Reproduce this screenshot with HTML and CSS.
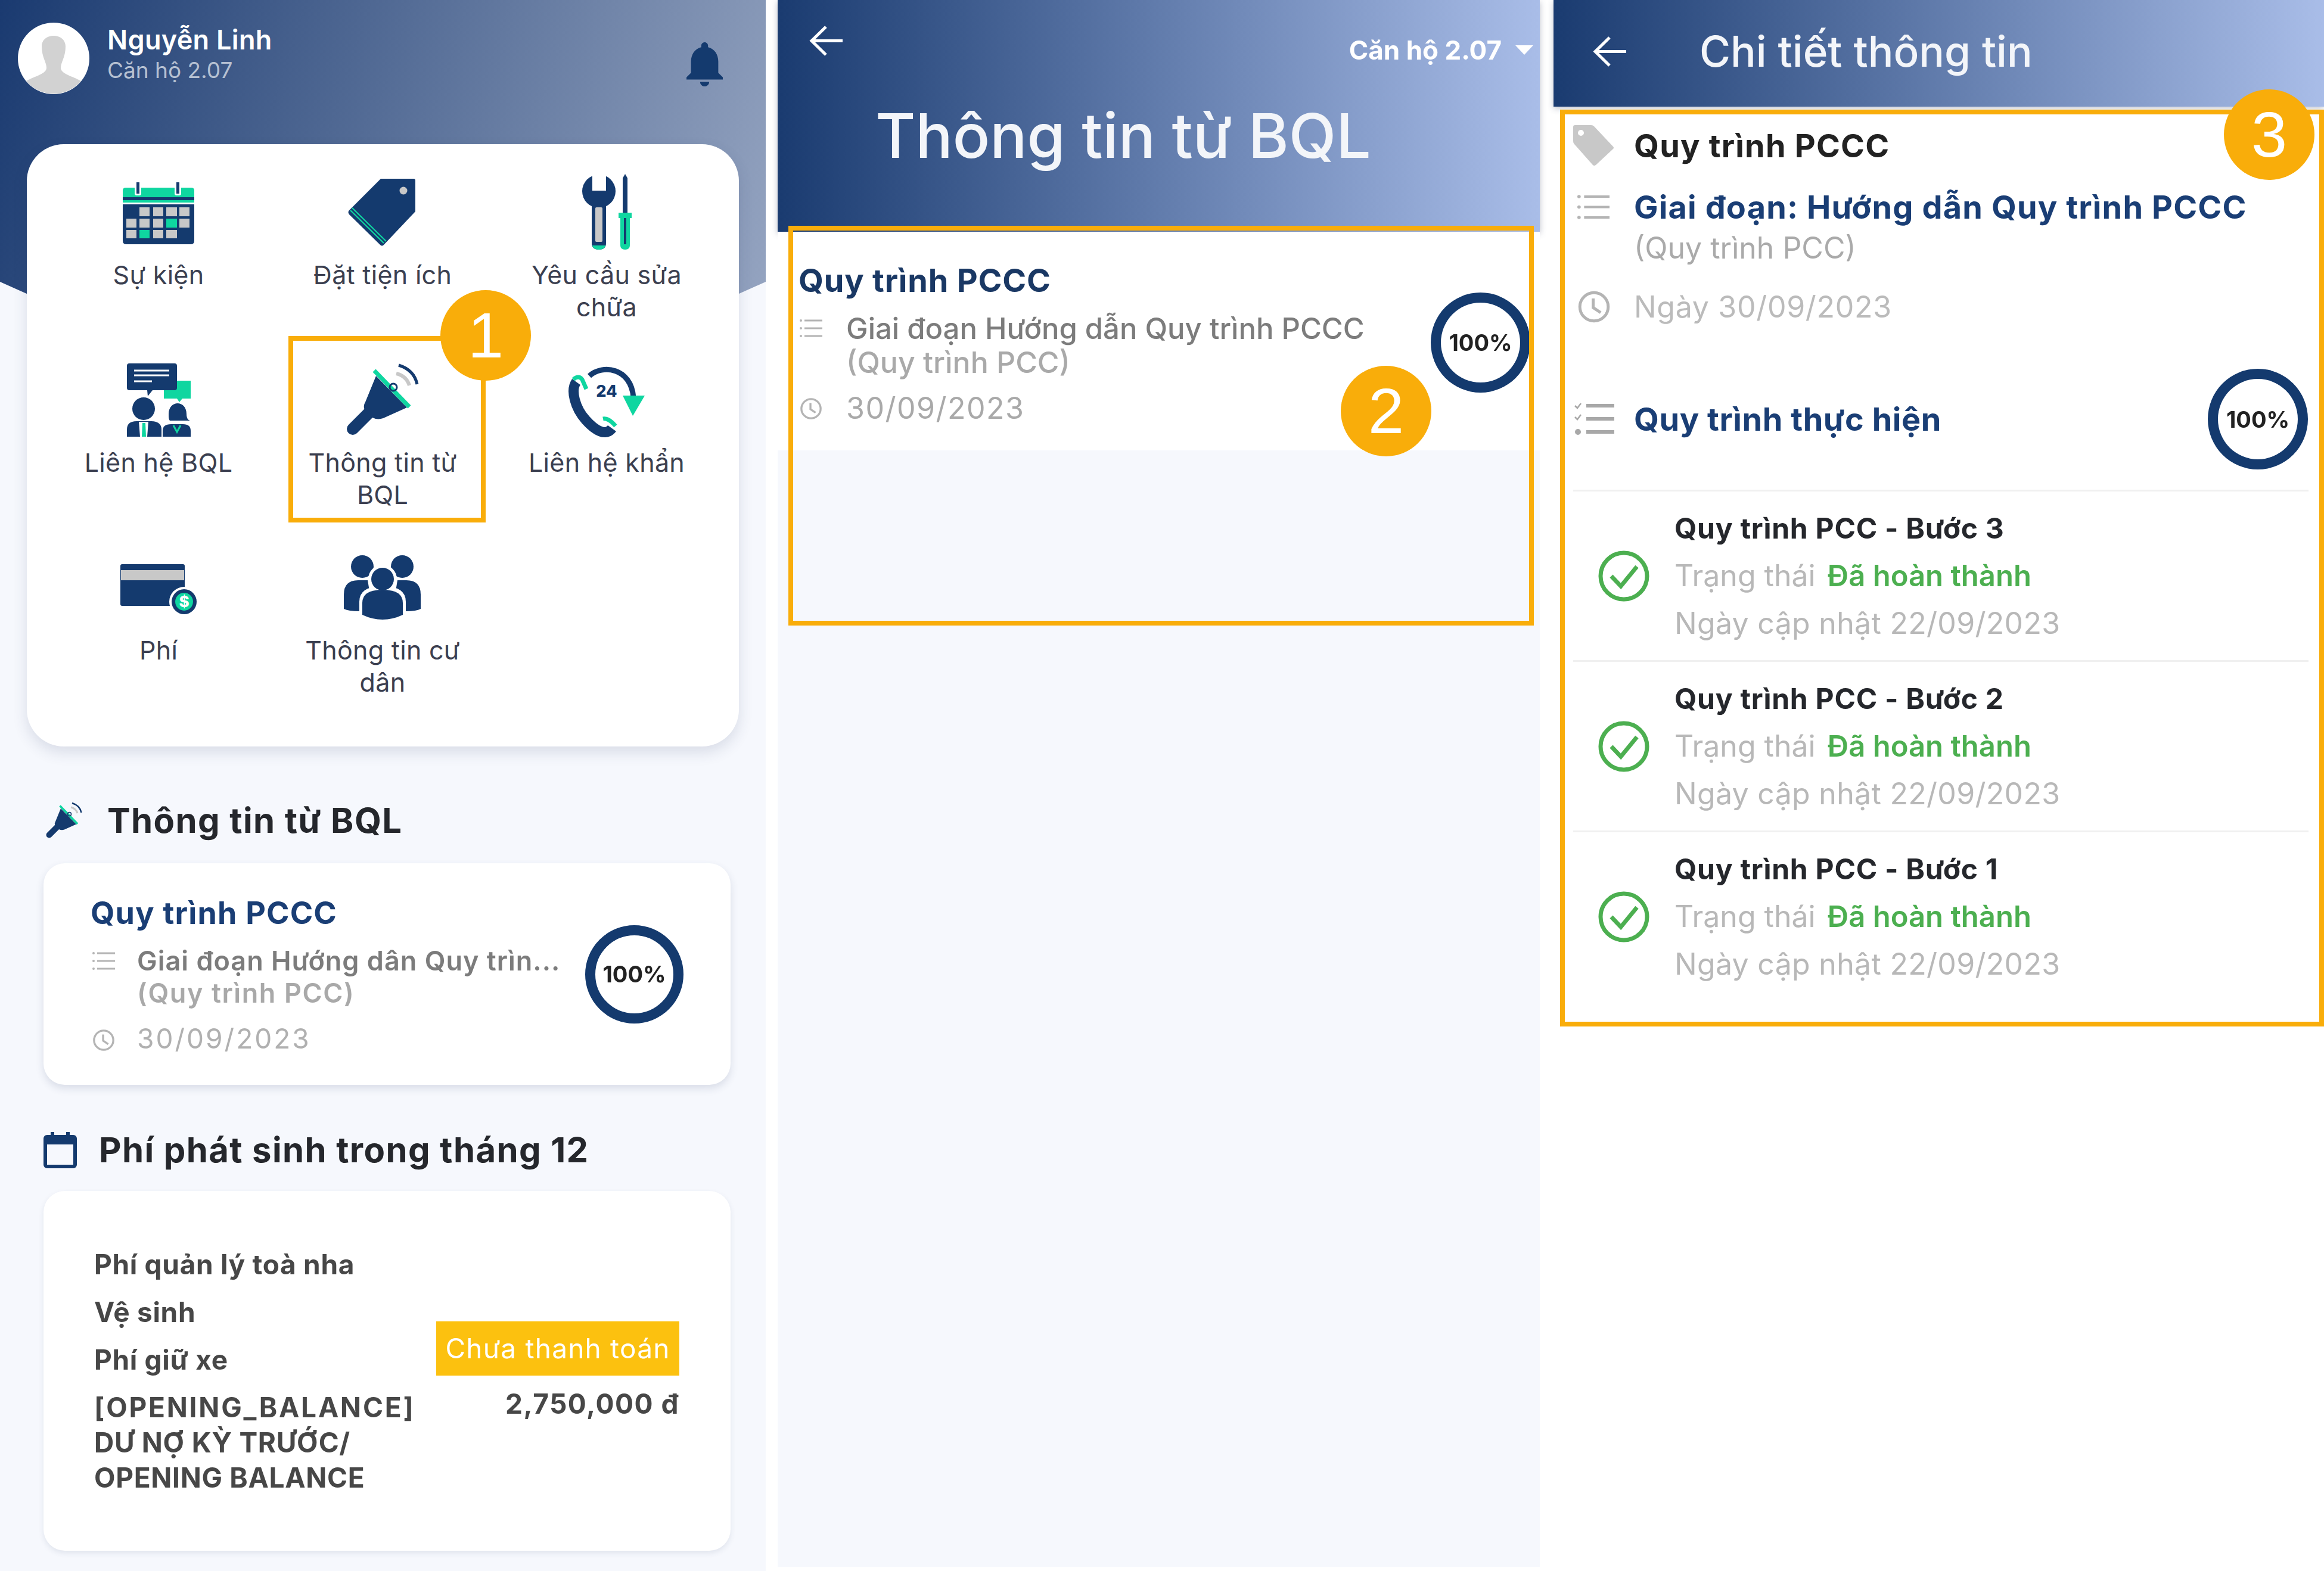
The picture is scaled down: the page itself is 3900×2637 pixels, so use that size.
FILE: index.html
```html
<!DOCTYPE html>
<html lang="vi">
<head>
    <meta charset="UTF-8">
    <meta name="viewport" content="width=device-width, initial-scale=1.0">
    <title>Thông tin từ BQL</title>
    <link rel="stylesheet" href="styles.css">
</head>
<body>
    <svg class="icon-defs" width="0" height="0">
        <symbol id="i-megaphone" viewBox="0 0 130 130">
            <path d="M44 84 L15 113" stroke="#143a6e" stroke-width="20" stroke-linecap="round"/>
            <path d="M54 24 L106 77 L66 95 Q52 100 40 88 Q30 78 36 68 Z" fill="#143a6e"/>
            <path d="M51 15 L110 76" stroke="#0fd6a0" stroke-width="7"/>
            <path d="M92 6 Q118 14 123 38" fill="none" stroke="#143a6e" stroke-width="5"/>
            <path d="M88 20 Q105 24 110 40" fill="none" stroke="#c8c8c8" stroke-width="6"/>
            <circle cx="83" cy="43" r="6" fill="none" stroke="#143a6e" stroke-width="3"/>
        </symbol>
        <symbol id="i-list" viewBox="0 0 38 32">
            <g fill="#b4b4b4">
                <circle cx="2" cy="3" r="2"/><rect x="8" y="1.5" width="30" height="3"/>
                <circle cx="2" cy="16" r="2"/><rect x="8" y="14.5" width="30" height="3"/>
                <circle cx="2" cy="29" r="2"/><rect x="8" y="27.5" width="30" height="3"/>
            </g>
        </symbol>
        <symbol id="i-clock" viewBox="0 0 40 40">
            <circle cx="20" cy="20" r="17" fill="none" stroke="#b4b4b4" stroke-width="3.5"/>
            <path d="M19 10 V21 L28 27" fill="none" stroke="#b4b4b4" stroke-width="3.5"/>
        </symbol>
        <symbol id="i-check" viewBox="0 0 86 86">
            <circle cx="43" cy="43" r="39" fill="none" stroke="#4caf50" stroke-width="7"/>
            <path d="M22 43 L38 60 L65 27" fill="none" stroke="#4caf50" stroke-width="7"/>
        </symbol>
        <symbol id="i-back" viewBox="0 0 57 53">
            <path d="M56 26.5 H5 M28 3 L4 26.5 L28 50" fill="none" stroke="#fff" stroke-width="5"/>
        </symbol>
    </svg>

    <div class="screens">

        <!-- home -->
        <section class="phone phone-home">
            <header class="home-head">
                <svg class="avatar" viewBox="0 0 120 120">
                    <circle cx="60" cy="60" r="60" fill="#fff"/>
                    <path d="M40 40 C40 16 80 16 80 40 C80 58 72 66 72 76 C72 86 92 90 106 98 A60 60 0 0 1 14 98 C28 90 48 86 48 76 C48 66 40 58 40 40 Z" fill="#d2d2d2"/>
                </svg>
                <div class="home-user">
                    <div class="home-name">Nguyễn Linh</div>
                    <div class="home-flat">Căn hộ 2.07</div>
                </div>
                <svg class="bell" viewBox="4 2.5 16 19.5" preserveAspectRatio="none">
                    <path fill="#143a6e" d="M12 22c1.1 0 2-.9 2-2h-4c0 1.1.9 2 2 2zm6-6v-5c0-3.07-1.63-5.64-4.5-6.32V4c0-.83-.67-1.5-1.5-1.5s-1.5.67-1.5 1.5v.68C7.64 5.36 6 7.92 6 11v5l-2 2v1h16v-1l-2-2z"/>
                </svg>
            </header>

            <div class="menu-card">
                <div class="menu-item">
                    <svg class="menu-icon" viewBox="0 0 130 130">
                        <path d="M5 28 Q5 23 10 23 H120 Q125 23 125 28 V48 H5 Z" fill="#0fd6a0"/>
                        <rect x="5" y="39" width="120" height="5" fill="#143a6e"/>
                        <path d="M5 51 H125 V112 Q125 118 119 118 H11 Q5 118 5 112 Z" fill="#143a6e"/>
                        <rect x="25" y="14" width="11" height="22" rx="3" fill="#fff"/>
                        <rect x="92" y="14" width="11" height="22" rx="3" fill="#fff"/>
                        <rect x="28" y="14" width="5" height="19" fill="#143a6e"/>
                        <rect x="95" y="14" width="5" height="19" fill="#143a6e"/>
                        <g fill="#c8c8c8">
                            <rect x="33" y="56" width="17" height="15"/><rect x="56" y="56" width="17" height="15"/><rect x="78" y="56" width="18" height="15"/><rect x="100" y="56" width="17" height="15"/>
                            <rect x="11" y="75" width="17" height="15"/><rect x="33" y="75" width="17" height="15"/><rect x="56" y="75" width="17" height="15"/><rect x="100" y="75" width="17" height="15"/>
                            <rect x="11" y="94" width="17" height="14"/><rect x="56" y="94" width="17" height="14"/><rect x="78" y="94" width="18" height="14"/>
                        </g>
                        <rect x="78" y="75" width="18" height="15" fill="#0fd6a0"/>
                        <rect x="33" y="94" width="17" height="14" fill="#0fd6a0"/>
                    </svg>
                    <span class="menu-label">Sự kiện</span>
                </div>
                <div class="menu-item">
                    <svg class="menu-icon" viewBox="0 0 130 130">
                        <path d="M62 8 H117 Q120 8 120 11 V63 L67 119 Q64 122 61 119 L9 68 Q6 64 9 61 Z" fill="#143a6e"/>
                        <circle cx="100" cy="28" r="6.5" fill="#c8c8c8"/>
                        <path d="M14 57 L71 113 M11 61 L67 116" stroke="#0fd6a0" stroke-width="2.2"/>
                    </svg>
                    <span class="menu-label">Đặt tiện ích</span>
                </div>
                <div class="menu-item">
                    <svg class="menu-icon" viewBox="0 0 130 130">
                        <circle cx="52" cy="29" r="28" fill="#143a6e"/>
                        <rect x="41" y="0" width="23" height="28" fill="#fff"/>
                        <path d="M40 50 H64 V116 Q64 127 52 127 Q40 127 40 116 Z" fill="#143a6e"/>
                        <path d="M41 120 H63 Q62 127 52 127 Q42 127 41 120 Z" fill="#0fd6a0"/>
                        <rect x="46" y="56" width="12" height="58" rx="2" fill="#c8c8c8"/>
                        <path d="M96 0 L100 7 V65 H92 V7 Z" fill="#143a6e"/>
                        <rect x="85" y="65" width="22" height="9" fill="#0fd6a0"/>
                        <path d="M88 74 H104 V120 Q104 127 96 127 Q88 127 88 120 Z" fill="#0fd6a0"/>
                        <rect x="94" y="74" width="4" height="44" fill="#143a6e"/>
                    </svg>
                    <span class="menu-label">Yêu cầu sửa chữa</span>
                </div>
                <div class="menu-item">
                    <svg class="menu-icon" viewBox="0 0 130 130">
                        <path d="M74 32 H119 V62 H105 L100 68 L96 62 H74 Z" fill="#0fd6a0"/>
                        <path d="M16 3 H92 Q96 3 96 7 V44 Q96 48 92 48 H55 L47 58 L46 48 H16 Q12 48 12 44 V7 Q12 3 16 3 Z" fill="#143a6e"/>
                        <path d="M24 15 H83 M24 23 H83 M24 33 H54" stroke="#fff" stroke-width="3"/>
                        <circle cx="40" cy="79" r="19" fill="#143a6e"/>
                        <path d="M12 126 V114 Q12 100 28 100 H52 Q70 100 70 114 V126 Z" fill="#143a6e"/>
                        <path d="M32 101 H48 L46 126 H34 Z" fill="#fff"/>
                        <path d="M38 103 H43 L44 126 H37 Z" fill="#0fd6a0"/>
                        <path d="M82 88 C82 64 112 64 112 88 C112 94 114 98 118 99 H84 C82 97 82 92 82 88 Z" fill="#143a6e"/>
                        <path d="M72 126 V116 Q72 105 86 105 H106 Q119 105 119 116 V126 Z" fill="#143a6e"/>
                        <path d="M90 107 L96 118 L102 107" fill="none" stroke="#0fd6a0" stroke-width="3"/>
                    </svg>
                    <span class="menu-label">Liên hệ BQL</span>
                </div>
                <div class="menu-item">
                    <svg class="menu-icon" viewBox="0 0 130 130"><use href="#i-megaphone"/></svg>
                    <span class="menu-label">Thông tin từ BQL</span>
                </div>
                <div class="menu-item">
                    <svg class="menu-icon" viewBox="0 0 130 130">
                        <path d="M14 34 C4 48 12 78 30 98 C46 116 64 126 74 112" fill="none" stroke="#143a6e" stroke-width="17"/>
                        <path d="M9 30 Q18 22 24 30 L31 46" fill="none" stroke="#0fd6a0" stroke-width="7"/>
                        <path d="M59 96 Q68 94 80 108" fill="none" stroke="#0fd6a0" stroke-width="7"/>
                        <path d="M36 24 C58 4 106 10 110 60" fill="none" stroke="#143a6e" stroke-width="9"/>
                        <path d="M92 57 H129 L109 91 Z" fill="#0fd6a0"/>
                        <text class="icon-num" x="65" y="59" text-anchor="middle">24</text>
                    </svg>
                    <span class="menu-label">Liên hệ khẩn</span>
                </div>
                <div class="menu-item">
                    <svg class="menu-icon" viewBox="0 0 130 130">
                        <rect x="1" y="25" width="108" height="70" rx="3" fill="#143a6e"/>
                        <rect x="2" y="35" width="106" height="17" fill="#c8c8c8"/>
                        <circle cx="108" cy="88" r="25" fill="#fff"/>
                        <circle cx="108" cy="88" r="21" fill="#143a6e"/>
                        <circle cx="108" cy="88" r="15" fill="#0fd6a0"/>
                        <text class="icon-dollar" x="108" y="97" text-anchor="middle">$</text>
                    </svg>
                    <span class="menu-label">Phí</span>
                </div>
                <div class="menu-item">
                    <svg class="menu-icon" viewBox="0 0 130 130">
                        <circle cx="31" cy="29" r="19" fill="#143a6e"/>
                        <circle cx="98" cy="29" r="19" fill="#143a6e"/>
                        <path d="M0 100 V76 Q0 52 24 52 H40 L48 100 L26 104 Q8 104 0 100 Z" fill="#143a6e"/>
                        <path d="M129 100 V76 Q129 52 105 52 H90 L82 100 L104 104 Q122 104 129 100 Z" fill="#143a6e"/>
                        <path d="M26 118 V88 Q26 62 65 62 Q104 62 104 88 V118 Z" fill="#fff"/>
                        <circle cx="65" cy="50" r="24" fill="#fff"/>
                        <circle cx="65" cy="50" r="19" fill="#143a6e"/>
                        <path d="M31 110 V90 Q31 68 65 68 Q99 68 99 90 V110 Q65 126 31 110 Z" fill="#143a6e"/>
                    </svg>
                    <span class="menu-label">Thông tin cư dân</span>
                </div>
            </div>

            <h2 class="sec-title sec-news">
                <svg class="sec-icon" width="65" height="65"><use href="#i-megaphone"/></svg>
                Thông tin từ BQL
            </h2>
            <div class="news-card">
                <div class="news-body">
                    <div class="news-title">Quy trình PCCC</div>
                    <div class="news-row">
                        <svg class="news-icon" width="38" height="32"><use href="#i-list"/></svg>
                        <div>
                            <div class="news-stage">Giai đoạn Hướng dân Quy trìn...</div>
                            <div class="news-sub">(Quy trình PCC)</div>
                        </div>
                    </div>
                    <div class="news-row news-date">
                        <svg class="news-icon" width="38" height="38"><use href="#i-clock"/></svg>
                        <div>30/09/2023</div>
                    </div>
                </div>
                <div class="ring">100%</div>
            </div>

            <h2 class="sec-title sec-fee">
                <svg class="sec-icon-cal" viewBox="0 0 56 61">
                    <rect x="3" y="8" width="50" height="50" rx="3" fill="none" stroke="#143a6e" stroke-width="6"/>
                    <rect x="3" y="8" width="50" height="13" fill="#143a6e"/>
                    <rect x="12" y="0" width="6" height="10" fill="#143a6e"/>
                    <rect x="38" y="0" width="6" height="10" fill="#143a6e"/>
                </svg>
                Phí phát sinh trong tháng 12
            </h2>
            <div class="fee-card">
                <div class="fee-list">
                    <div class="fee-row">Phí quản lý toà nha</div>
                    <div class="fee-row">Vệ sinh</div>
                    <div class="fee-row">Phí giữ xe</div>
                    <div class="fee-row"><span class="fee-code">[OPENING_BALANCE]</span><br>DƯ NỢ KỲ TRƯỚC/<br>OPENING BALANCE</div>
                </div>
                <div class="fee-side">
                    <div class="fee-badge">Chưa thanh toán</div>
                    <div class="fee-total">2,750,000 đ</div>
                </div>
            </div>

            <div class="mark mark-home"></div>
            <div class="step-badge badge-home">1</div>
        </section>

        <!-- list -->
        <section class="phone phone-list">
            <header class="list-head">
                <div class="list-top">
                    <svg class="back" width="57" height="53"><use href="#i-back"/></svg>
                    <div class="flat-select">Căn hộ 2.07<span class="caret"></span></div>
                </div>
                <h1 class="list-title">Thông tin từ BQL</h1>
            </header>
            <div class="list-item">
                <div class="list-text">
                    <div class="list-name">Quy trình PCCC</div>
                    <div class="list-row">
                        <svg class="list-icon" width="38" height="32"><use href="#i-list"/></svg>
                        <div>
                            <div class="list-stage">Giai đoạn Hướng dẫn Quy trình PCCC</div>
                            <div class="list-sub">(Quy trình PCC)</div>
                        </div>
                    </div>
                    <div class="list-row list-date">
                        <svg class="list-icon" width="38" height="40"><use href="#i-clock"/></svg>
                        <div>30/09/2023</div>
                    </div>
                </div>
                <div class="ring ring-list">100%</div>
            </div>

            <div class="mark mark-list"></div>
            <div class="step-badge badge-list">2</div>
        </section>

        <!-- detail -->
        <section class="phone phone-detail">
            <header class="detail-head">
                <svg class="back" width="57" height="53"><use href="#i-back"/></svg>
                <h1 class="detail-title">Chi tiết thông tin</h1>
            </header>

            <div class="info-row info-name">
                <svg class="info-icon" viewBox="0 0 69 69" width="69" height="69">
                    <path d="M3 0 H30 Q33 0 35 2 L67 36 Q69 38 67 40 L38 67 Q35 69 33 67 L2 32 Q0 30 0 27 V3 Q0 0 3 0 Z" fill="#c8c8c8"/>
                    <circle cx="13" cy="13" r="5" fill="#fff"/>
                </svg>
                <div>Quy trình PCCC</div>
            </div>
            <div class="info-row info-stage">
                <svg class="info-icon" width="54" height="43" viewBox="0 0 38 32" preserveAspectRatio="none"><use href="#i-list"/></svg>
                <div>Giai đoạn: Hướng dẫn Quy trình PCCC</div>
            </div>
            <div class="info-sub">(Quy trình PCC)</div>
            <div class="info-row info-date">
                <svg class="info-icon" width="56" height="56"><use href="#i-clock"/></svg>
                <div>Ngày 30/09/2023</div>
            </div>
            <div class="info-row info-process">
                <svg class="info-icon" viewBox="0 0 67 55" width="67" height="55">
                    <path d="M1 5 L5 9 L11 1 M1 24 L5 28 L11 20" fill="none" stroke="#a8a8a8" stroke-width="2.5"/>
                    <circle cx="6" cy="49" r="5" fill="#a8a8a8"/>
                    <g fill="#a8a8a8">
                        <rect x="20" y="2" width="47" height="6"/><rect x="20" y="24" width="47" height="6"/><rect x="20" y="46" width="47" height="6"/>
                    </g>
                </svg>
                <div class="info-process-name">Quy trình thực hiện</div>
                <div class="ring ring-detail">100%</div>
            </div>

            <div class="step-row">
                <svg class="step-icon" width="86" height="86"><use href="#i-check"/></svg>
                <div>
                    <div class="step-name">Quy trình PCC - Bước 3</div>
                    <div class="step-line step-status">Trạng thái <span class="step-done">Đã hoàn thành</span></div>
                    <div class="step-line">Ngày cập nhật 22/09/2023</div>
                </div>
            </div>
            <div class="step-row">
                <svg class="step-icon" width="86" height="86"><use href="#i-check"/></svg>
                <div>
                    <div class="step-name">Quy trình PCC - Bước 2</div>
                    <div class="step-line step-status">Trạng thái <span class="step-done">Đã hoàn thành</span></div>
                    <div class="step-line">Ngày cập nhật 22/09/2023</div>
                </div>
            </div>
            <div class="step-row">
                <svg class="step-icon" width="86" height="86"><use href="#i-check"/></svg>
                <div>
                    <div class="step-name">Quy trình PCC - Bước 1</div>
                    <div class="step-line step-status">Trạng thái <span class="step-done">Đã hoàn thành</span></div>
                    <div class="step-line">Ngày cập nhật 22/09/2023</div>
                </div>
            </div>

            <div class="mark mark-detail"></div>
            <div class="step-badge badge-detail">3</div>
        </section>
    </div>
</body>
</html>
```

FILE: styles.css
```css
* {
    box-sizing: border-box;
}
body {
    margin: 0;
    background-color: white;
    font-family: Inter, "Noto Sans", sans-serif;
}
.icon-defs {
    position: absolute;
}
.screens {
    display: flex;
    width: 3900px;
    height: 2637px;
    overflow: hidden;
}
.phone {
    position: relative;
    flex: none;
}
.phone-home {
    width: 1285px;
    background-color: #f6f8fd;
}
.phone-list {
    width: 1279px;
    height: 2630px;
    margin-left: 20px;
    background-color: #f6f8fd;
}
.phone-detail {
    width: 1293px;
    margin-left: 23px;
}

/* the lower parts of the source screenshots are soft */
.sec-title, .news-card, .fee-card, .list-head, .list-item, .detail-head, .info-row, .info-sub, .step-row {
    filter: blur(0.7px);
}

/* home */
.home-head {
    display: flex;
    align-items: flex-start;
    height: 600px;
    padding: 38px 72px 0 30px;
    background: linear-gradient(108deg, #1a3a70, #97a6c2);
    clip-path: polygon(0 0, 100% 0, 100% 473px, 50% 760px, 0 473px);
}
.avatar {
    width: 120px;
    height: 120px;
    flex: none;
}
.home-user {
    margin-left: 30px;
}
.home-name {
    color: white;
    font-size: 45px;
    font-weight: 600;
    letter-spacing: 0.3px;
    line-height: 56px;
    margin-top: 1px;
}
.home-flat {
    color: #b7c1d2;
    font-size: 37px;
    line-height: 46px;
    margin-top: 0;
}
.bell {
    width: 61px;
    height: 74px;
    margin: 33px 0 0 auto;
}
.menu-card {
    display: grid;
    grid-template-columns: repeat(3, 376px);
    row-gap: 65px;
    margin: -358px 45px 0 45px;
    height: 1011px;
    padding: 50px 33px 0;
    background-color: white;
    border-radius: 62px;
    box-shadow: 0 10px 24px rgba(40, 60, 100, 0.14);
    align-content: start;
    position: relative;
}
.menu-item {
    display: flex;
    flex-direction: column;
    align-items: center;
    height: 250px;
    text-align: center;
}
.menu-icon {
    width: 130px;
    height: 130px;
    flex: none;
    overflow: visible;
}
.menu-label {
    width: 290px;
    margin-top: 12px;
    color: #3b3f50;
    font-size: 43px;
    letter-spacing: 0.3px;
    line-height: 54px;
}
.icon-num {
    fill: #143a6e;
    font-size: 27px;
    font-weight: 800;
}
.icon-dollar {
    fill: white;
    font-size: 26px;
    font-weight: 800;
}
.sec-title {
    display: flex;
    align-items: center;
    margin: 0;
    color: #25272c;
    font-size: 58px;
    font-weight: 700;
    letter-spacing: 1.4px;
    line-height: 70px;
}
.sec-news {
    margin-top: 89px;
    padding-left: 75px;
}
.sec-icon {
    flex: none;
    margin-right: 40px;
}
.sec-fee {
    margin-top: 74px;
    padding-left: 73px;
}
.sec-icon-cal {
    width: 56px;
    height: 61px;
    flex: none;
    margin-right: 37px;
}
.news-card {
    display: flex;
    align-items: center;
    height: 372px;
    margin: 37px 59px 0 73px;
    padding: 0 79px 0 79px;
    background-color: white;
    border-radius: 36px;
    box-shadow: 0 6px 14px rgba(40, 60, 100, 0.14);
}
.news-body {
    flex: 1;
}
.news-title {
    color: #1a3e75;
    font-size: 52px;
    font-weight: 700;
    letter-spacing: 1.2px;
    line-height: 64px;
}
.news-row {
    display: flex;
    margin-top: 21px;
}
.news-icon {
    flex: none;
    margin: 11px 37px 0 3px;
}
.news-stage {
    color: #7c7c7c;
    font-size: 45px;
    font-weight: 600;
    letter-spacing: 1px;
    line-height: 54px;
    white-space: nowrap;
}
.news-sub {
    color: #a9a9a9;
    font-size: 45px;
    font-weight: 600;
    letter-spacing: 1.6px;
    line-height: 54px;
}
.news-date {
    color: #b0b0b0;
    font-size: 46px;
    letter-spacing: 3px;
    line-height: 54px;
    margin-top: 22px;
}
.ring {
    display: flex;
    align-items: center;
    justify-content: center;
    flex: none;
    width: 165px;
    height: 165px;
    border: 17px solid #143a6e;
    border-radius: 50%;
    background-color: white;
    color: #222;
    font-size: 38px;
    font-weight: 700;
    letter-spacing: 0;
}
.fee-card {
    display: flex;
    justify-content: space-between;
    height: 604px;
    margin: 34px 59px 0 73px;
    padding: 94px 86px 0 85px;
    background-color: white;
    border-radius: 36px;
    box-shadow: 0 4px 10px rgba(40, 60, 100, 0.1);
}
.fee-row {
    margin-bottom: 21px;
    color: #474747;
    font-size: 46px;
    font-weight: 700;
    letter-spacing: 0.7px;
    line-height: 59px;
    white-space: nowrap;
}
.fee-code {
    letter-spacing: 2.8px;
}
.fee-side {
    display: flex;
    flex-direction: column;
    align-items: flex-end;
    padding-top: 125px;
}
.fee-badge {
    width: 408px;
    height: 91px;
    background-color: #fcc10f;
    color: white;
    font-size: 46px;
    letter-spacing: 1.2px;
    line-height: 91px;
    text-align: center;
}
.fee-total {
    margin-top: 17px;
    color: #474747;
    font-size: 46px;
    font-weight: 700;
    letter-spacing: 1.5px;
    line-height: 60px;
}

/* list */
.list-head {
    height: 389px;
    background: linear-gradient(90deg, #1a3b70, #a9bde8);
    box-shadow: 0 3px 10px rgba(60, 70, 100, 0.35);
    position: relative;
}
.list-top {
    display: flex;
    justify-content: space-between;
    align-items: flex-start;
    padding: 42px 11px 0 53px;
}
.back {
    flex: none;
}
.flat-select {
    display: flex;
    align-items: center;
    margin-top: 12px;
    color: white;
    font-size: 44px;
    font-weight: 700;
    line-height: 60px;
}
.caret {
    width: 0;
    height: 0;
    margin-left: 23px;
    border-left: 15px solid transparent;
    border-right: 15px solid transparent;
    border-top: 16px solid white;
}
.list-title {
    margin: 49px 0 0 164px;
    color: #f3f5f9;
    font-size: 103.5px;
    font-weight: 500;
    line-height: 130px;
}
.list-item {
    display: flex;
    justify-content: space-between;
    height: 367px;
    padding: 50px 16px 0 35px;
    background-color: white;
}
.list-name {
    color: #1a3864;
    font-size: 54px;
    font-weight: 700;
    letter-spacing: 0.8px;
    line-height: 64px;
}
.list-row {
    display: flex;
    margin-top: 20px;
}
.list-icon {
    flex: none;
    margin: 12px 40px 0 2px;
}
.list-stage {
    color: #7c7c7c;
    font-size: 49px;
    font-weight: 500;
    line-height: 57px;
    white-space: nowrap;
}
.list-sub {
    color: #a9a9a9;
    font-size: 50px;
    font-weight: 500;
    line-height: 57px;
}
.list-date {
    color: #a9a9a9;
    font-size: 50px;
    letter-spacing: 1.5px;
    line-height: 57px;
}
.list-date .list-icon {
    margin-top: 9px;
}
.ring-list {
    width: 167px;
    height: 168px;
    margin-top: 52px;
}

/* detail */
.detail-head {
    display: flex;
    align-items: center;
    height: 179px;
    padding: 0 0 7px 66px;
    background: linear-gradient(90deg, #1a3b70, #a9bde8);
    box-shadow: 0 3px 10px rgba(60, 70, 100, 0.3);
    position: relative;
}
.detail-title {
    margin: 0 0 0 122px;
    color: #f3f5f9;
    font-size: 71px;
    font-weight: 500;
}
.info-row {
    display: flex;
    align-items: center;
    padding-left: 33px;
}
.info-icon {
    flex: none;
    margin-right: 33px;
}
.info-name {
    height: 64px;
    margin-top: 33px;
    color: #222;
    font-size: 54px;
    font-weight: 700;
    letter-spacing: 1.2px;
}
.info-stage {
    height: 64px;
    margin-top: 39px;
    color: #1a3e75;
    font-size: 54px;
    font-weight: 700;
    letter-spacing: 1.15px;
}
.info-stage .info-icon {
    margin: 0 41px 0 7px;
}
.info-sub {
    margin-top: 8px;
    padding-left: 135px;
    color: #aaa;
    font-size: 50px;
    line-height: 58px;
}
.info-date {
    height: 60px;
    margin-top: 40px;
    color: #bbb;
    font-size: 50px;
    letter-spacing: 0.7px;
}
.info-date .info-icon {
    margin: 0 39px 0 7px;
}
.info-process {
    margin-top: 74px;
    padding-right: 27px;
    color: #1a3e75;
    font-size: 54px;
    font-weight: 700;
    letter-spacing: 0.55px;
}
.info-process-name {
    flex: 1;
}
.info-process .info-icon {
    margin: 0 33px 0 2px;
}
.ring-detail {
    width: 168px;
    height: 169px;
}
.step-row {
    display: flex;
    align-items: center;
    height: 286px;
    margin: 34px 26px -34px 33px;
    padding-left: 42px;
    border-top: 3px solid #f0f0f0;
}
.step-icon {
    flex: none;
    margin-right: 42px;
}
.step-name {
    color: #25272c;
    font-size: 48px;
    font-weight: 700;
    letter-spacing: 0.75px;
    line-height: 60px;
}
.step-line {
    margin-top: 19px;
    color: #b8b8b8;
    font-size: 50px;
    letter-spacing: 0.3px;
    line-height: 60px;
}
.step-status {
    letter-spacing: 0;
}
.step-done {
    margin-left: 6px;
    color: #4caf50;
    font-size: 49px;
    font-weight: 600;
}

/* orange markers drawn over the screens */
.mark {
    position: absolute;
    border: 8px solid #f9ad0a;
}
.mark-home {
    left: 484px;
    top: 564px;
    width: 331px;
    height: 313px;
}
.mark-list {
    left: 18px;
    top: 379px;
    width: 1251px;
    height: 671px;
}
.mark-detail {
    left: 11px;
    top: 184px;
    width: 1282px;
    height: 1539px;
}
.step-badge {
    position: absolute;
    width: 152px;
    height: 152px;
    border-radius: 50%;
    background-color: #f9ad0a;
    color: white;
    font-family: "Liberation Sans", sans-serif;
    font-size: 108px;
    line-height: 152px;
    text-align: center;
}
.badge-home {
    left: 739px;
    top: 487px;
}
.badge-list {
    left: 945px;
    top: 614px;
}
.badge-detail {
    left: 1125px;
    top: 150px;
}
```
